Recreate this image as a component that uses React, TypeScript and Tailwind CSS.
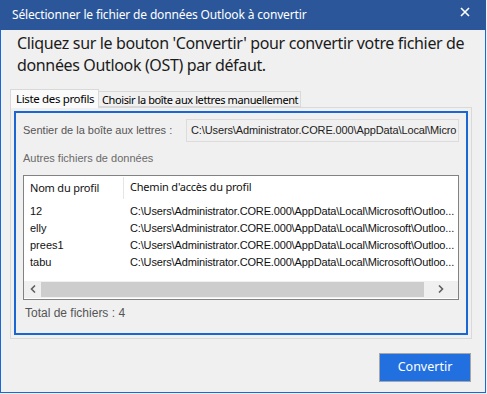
import React from "react";

const rows = ["12", "elly", "prees1", "tabu"];
const path = "C:\\Users\\Administrator.CORE.000\\AppData\\Local\\Microsoft\\Outloo...";

export default function App() {
  return (
    <div className="w-[487px] h-[394px] bg-[#f0f0f0] font-['Noto_Sans',sans-serif]">
      {/* title bar */}
      <div className="w-[486px] h-[30px] bg-[#2b579a] flex items-center justify-between pl-[12px] pr-[16px] text-white">
        <span className="text-[12px] leading-none tracking-[-0.15px]">Sélectionner le fichier de données Outlook à convertir</span>
        <svg width="10" height="10" viewBox="0 0 10 10" className="-mt-[6px]">
          <path d="M1 1 L9 9 M9 1 L1 9" stroke="white" strokeWidth="1.6" />
        </svg>
      </div>

      <div className="w-[486px] h-[363px] border-x border-b border-[#1a68d6] flex flex-col">
        <p className="pl-[16px] pt-[2px] text-[16px] leading-[22px] text-[#1b1b1b] tracking-[-0.35px]">
          Cliquez sur le bouton 'Convertir' pour convertir votre fichier de
          <br />
          données Outlook (OST) par défaut.
        </p>

        {/* tabs */}
        <div className="mt-[12px] ml-[9px] flex items-end h-[19px] text-black whitespace-nowrap">
          <div className="h-[19px] w-[89px] border border-b-0 border-[#d9d9d9] bg-[#fafafa] pl-[5px] leading-[17px] relative z-10 -mb-px text-[11.5px] tracking-[-0.35px]">Liste des profils</div>
          <div className="h-[16px] w-[202px] border border-l-0 border-[#d9d9d9] bg-[#f0f0f0] pl-[3px] leading-[15px] overflow-hidden text-[11px] tracking-[-0.4px]">Choisir la boîte aux lettres manuellement</div>
        </div>

        <div className="ml-[9px] w-[462px] h-[232px] border border-[#d9d9d9] p-[3px]">
          <div className="h-full border-2 border-[#1a66d2] flex flex-col pl-[7px] pr-[7px] font-['Liberation_Sans',sans-serif] text-[11px]">
            <div className="mt-[6px] flex items-center h-[23px]">
              <span className="text-[#555] w-[163px]">Sentier de la boîte aux lettres :</span>
              <div className="flex-1 h-[23px] border border-[#dcdcdc] bg-[#f0f0f0] text-[#222] leading-[21px] pl-[4px] overflow-hidden whitespace-nowrap text-[11px] tracking-[-0.12px]">
                C:\Users\Administrator.CORE.000\AppData\Local\Micro
              </div>
            </div>
            <div className="mt-[8px] text-[#6a6a6a] text-[11px]">Autres fichiers de données</div>

            {/* list */}
            <div className="mt-[8px] w-[436px] h-[125px] border border-[#828282] bg-white flex flex-col text-[11px] text-[#111]">
              <div className="flex h-[22px] items-center mt-[1px]">
                <div className="w-[100px] pl-[6px] border-r border-[#e5e5e5] h-[22px] leading-[22px] font-['Noto_Sans',sans-serif] text-[11px] tracking-[-0.2px]">Nom du profil</div>
                <div className="pl-[6px] font-['Noto_Sans',sans-serif] text-[11px] tracking-[-0.2px]">Chemin d'accès du profil</div>
              </div>
              <div className="flex-1 pt-[4px]">
                {rows.map((r) => (
                  <div key={r} className="flex h-[17px] leading-[17px] whitespace-nowrap">
                    <div className="w-[100px] pl-[6px]">{r}</div>
                    <div className="pl-[6px] overflow-hidden tracking-[-0.15px]">{path}</div>
                  </div>
                ))}
              </div>
              <div className="h-[17px] mb-[1px] flex items-center bg-[#f0f0f0]">
                <div className="w-[17px] flex justify-center">
                  <svg width="6" height="8" viewBox="0 0 6 8"><path d="M5 0.5 L1.5 4 L5 7.5" stroke="#606060" strokeWidth="1.6" fill="none" /></svg>
                </div>
                <div className="flex-1 h-[15px] bg-[#cdcdcd]" />
                <div className="w-[34px] flex justify-center">
                  <svg width="6" height="8" viewBox="0 0 6 8"><path d="M1 0.5 L4.5 4 L1 7.5" stroke="#606060" strokeWidth="1.6" fill="none" /></svg>
                </div>
              </div>
            </div>
            <div className="mt-[4px] pl-[2px] text-[#555] text-[12px]">Total de fichiers : 4</div>
          </div>
        </div>

        <div className="flex justify-end pr-[14px] mt-[14px]">
          <button className="w-[92px] h-[29px] bg-[#2270e0] border border-[#a6a6a6] text-white text-[12.5px] font-['Noto_Sans',sans-serif]">
            Convertir
          </button>
        </div>
      </div>
    </div>
  );
}
